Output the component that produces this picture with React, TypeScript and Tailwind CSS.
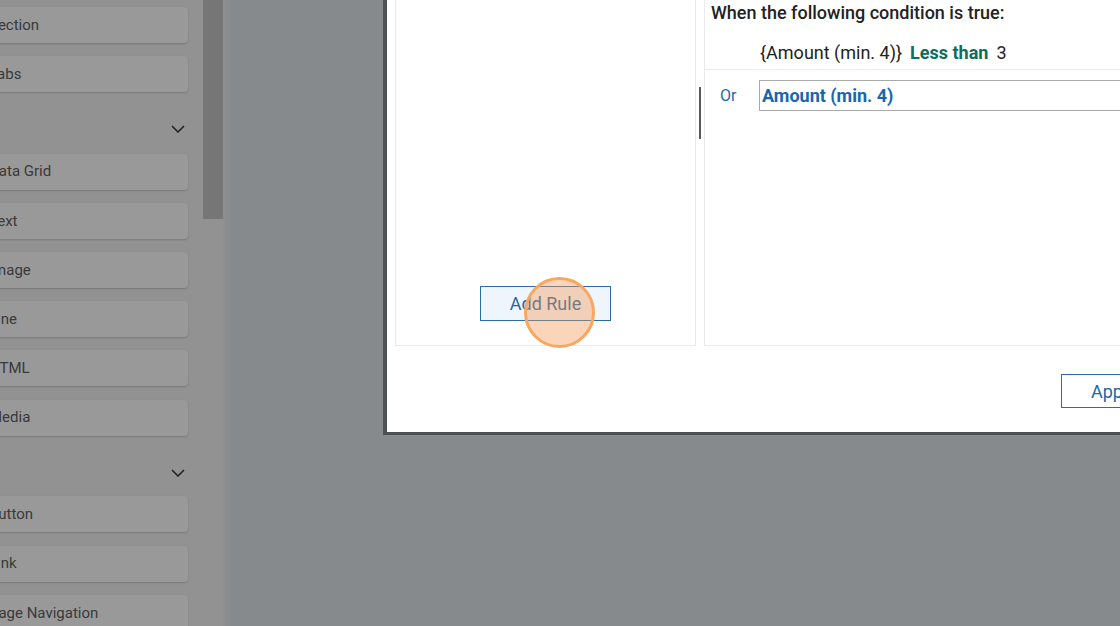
import React from "react";

const cards1 = ["Section", "Tabs"];
const cards2 = ["Data Grid", "Text", "Image", "Line", "HTML", "Media"];
const cards3 = ["Button", "Link", "Page Navigation"];

function Card({ label }: { label: string }) {
  return (
    <div className="h-[36px] w-[208px] -ml-[20px] rounded-[4px] bg-[#999999] shadow-[0_1px_2px_rgba(0,0,0,0.18)] flex items-center pl-[9px] text-[15px] text-[#3a3a3a] shrink-0">
      {label}
    </div>
  );
}

function Header({ tall }: { tall?: boolean }) {
  return (
    <div
      className={
        (tall ? "h-[61px]" : "h-[60.6px]") +
        " -my-[13px] shrink-0 relative flex justify-end pr-[18px] pt-[33px]"
      }
    >
      <svg width="14" height="8" viewBox="0 0 14 8" fill="none">
        <path d="M1 1 L7 7 L13 1" stroke="#1f1f1f" strokeWidth="1.5" />
      </svg>
    </div>
  );
}

export default function App() {
  return (
    <div
      className="w-[1120px] h-[626px] overflow-hidden relative flex bg-[#878a8d]"
      style={{ fontFamily: "Roboto, 'Liberation Sans', sans-serif" }}
    >
      <aside className="w-[203px] shrink-0 bg-[#929292] overflow-hidden flex flex-col gap-[13.2px] pt-[7px]">
        {cards1.map((c) => (
          <Card key={c} label={c} />
        ))}
        <Header tall />
        {cards2.map((c) => (
          <Card key={c} label={c} />
        ))}
        <Header />
        {cards3.map((c) => (
          <Card key={c} label={c} />
        ))}
      </aside>
      <div className="w-[20px] shrink-0 bg-[#929292]">
        <div className="h-[219px] bg-[#767676]" />
      </div>
      <div className="w-[3px] shrink-0 bg-[#8f8f8f]" />
      <div className="w-[5px] shrink-0 bg-[#8c8c8c] border-r border-[#898b8c]" />
      <main className="flex-1" />

      {/* Modal */}
      <div className="absolute left-[383px] top-0 w-[900px] h-[435px] bg-white border-l-[4px] border-b-[3px] border-[#4e5153] flex flex-col">
        <div className="h-[346px] flex pl-[8px] shrink-0">
          <div className="w-[301px] border-x border-b border-[#ebebeb] flex flex-col items-center justify-end pb-[24px]">
            <button className="w-[131px] h-[35px] border-[1.5px] border-[#2b6ea5] bg-[#eef5fd] text-[18px] text-[#2367a7] flex items-center justify-center">
              Add Rule
            </button>
          </div>
          <div className="w-[8px] shrink-0 pt-[87px] pl-[3px]">
            <div className="w-[2px] h-[52px] bg-[#5a5a5a]" />
          </div>
          <div className="flex-1 border-l border-b border-[#ebebeb] flex flex-col">
            <div className="pl-[6px] pt-[2px] h-[24px] leading-[22px] text-[18px] font-medium text-[#222222]">
              When the following condition is true:
            </div>
            <div className="border-b border-[#ececec] h-[46px] pl-[55px] pt-[18px] leading-[22px] text-[18px] text-[#222222] flex gap-[8px]">
              <span>{"{Amount (min. 4)}"}</span>
              <span className="font-bold text-[#0d6e5b]">Less than</span>
              <span>3</span>
            </div>
            <div className="flex items-start pl-[15px] pt-[10px]">
              <div className="w-[39px] h-[31px] flex items-center text-[16px] text-[#1d67b0]">Or</div>
              <div className="flex-1 h-[31px] border-[1.5px] border-[#a9a9a9] flex items-center pl-[2px] text-[18px] font-bold text-[#1766b2]">
                Amount (min. 4)
              </div>
            </div>
          </div>
        </div>
        <div className="flex pl-[674px] pt-[28px]">
          <button className="w-[140px] h-[34px] border-[1.5px] border-[#2b6ea5] text-[18px] text-[#2367a7] flex items-center justify-start pl-[29px]">
            Apply
          </button>
        </div>
      </div>

      {/* Click indicator */}
      <div className="absolute left-[524px] top-[277px] w-[71px] h-[71px] rounded-full border-[3px] border-[#f6a862] bg-[rgba(245,150,80,0.4)]" />
    </div>
  );
}
